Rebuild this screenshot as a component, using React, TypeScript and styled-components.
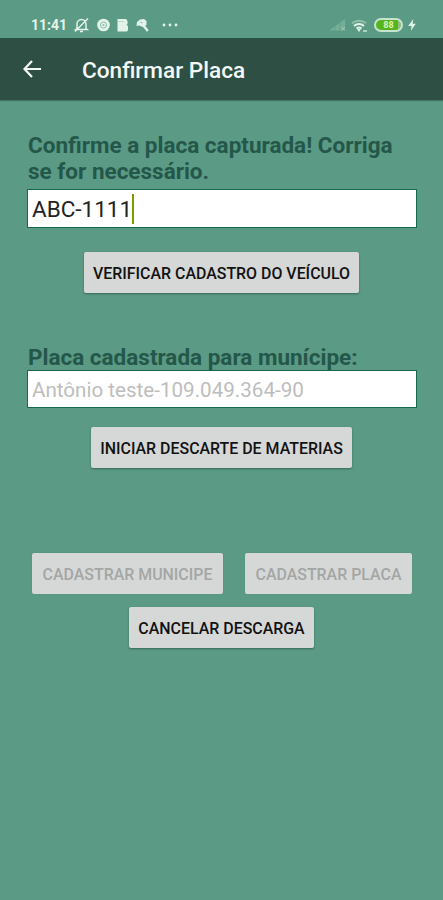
import React from 'react';
import styled, { createGlobalStyle } from 'styled-components';

const GlobalStyle = createGlobalStyle`
  * { box-sizing: border-box; }
  body { margin: 0; background: #5b9a84; font-family: Roboto, sans-serif; }
`;

const Screen = styled.div`
  width: 443px;
  height: 900px;
  overflow: hidden;
  background: #5b9a84;
`;

const StatusBar = styled.header`
  height: 38px;
  padding: 12px 27px 0 31px;
  display: flex;
  justify-content: space-between;
  color: #e4f3ea;
`;

const StatusGroup = styled.div<{ $gap: number }>`
  height: 26px;
  display: flex;
  align-items: center;
  gap: ${(p) => p.$gap}px;
`;

const Clock = styled.span`
  width: 35px;
  font-size: 14px;
  font-weight: 700;
  white-space: nowrap;
`;

const StatusIcons = styled.div`
  margin-right: 5px;
  display: flex;
  align-items: center;
  gap: 7.5px;
`;

const Battery = styled.span`
  width: 29px;
  height: 14px;
  margin-left: 1px;
  border: 2px solid #c5e3cf;
  border-radius: 7px;
  background: linear-gradient(90deg, #55b51c 88%, #91bd83 88%);
  color: #d9f3b8;
  font-size: 9px;
  font-weight: 700;
  line-height: 10px;
  text-align: center;
`;

const AppBar = styled.nav`
  height: 62px;
  padding-left: 21px;
  display: flex;
  align-items: center;
  background: #2d4f44;
  color: #f4f8f6;
  box-shadow: 0 1px 1px rgba(35, 75, 62, 0.45);
`;

const Title = styled.h1`
  margin: 4px 0 0 39px;
  font-size: 22.6px;
  font-weight: 500;
  line-height: 28px;
  white-space: nowrap;
`;

const Form = styled.main`
  padding: 32px 26px 0 27px;
  display: flex;
  flex-direction: column;
`;

const Label = styled.label<{ $top?: number }>`
  margin-top: ${(p) => p.$top ?? 0}px;
  padding-left: 1px;
  color: #24574a;
  font-size: 22.5px;
  font-weight: 700;
  line-height: 26px;
  white-space: nowrap;
`;

const Field = styled.div<{ $height: number; $top: number; $muted?: boolean }>`
  height: ${(p) => p.$height}px;
  margin-top: ${(p) => p.$top}px;
  padding: 1px 0 0 4px;
  display: flex;
  align-items: center;
  border: 1px solid #17694e;
  background: #fff;
  color: ${(p) => (p.$muted ? '#bdbdbd' : '#222')};
  font-size: ${(p) => (p.$muted ? 20.6 : 22.5)}px;
  line-height: 26px;
  white-space: nowrap;
`;

const Caret = styled.span`
  width: 2px;
  height: 30px;
  background: #7a9e00;
`;

const ButtonRow = styled.div<{ $top: number; $shift?: number }>`
  margin-top: ${(p) => p.$top}px;
  padding-right: ${(p) => p.$shift ?? 0}px;
  display: flex;
  justify-content: center;
  gap: 22px;
`;

const Button = styled.button<{ $width: number }>`
  width: ${(p) => p.$width}px;
  height: 41px;
  padding: 2px 0 0;
  border: 0;
  border-radius: 2px;
  background: #d6d8d7;
  color: #121212;
  font: 500 15.93px/20px Roboto, sans-serif;
  white-space: nowrap;
  box-shadow: 0 1px 2px rgba(20, 60, 45, 0.5);
  &:disabled {
    color: #a3a6a5;
    box-shadow: 0 0 1px rgba(20, 60, 45, 0.25);
  }
`;

const MutedBell = () => (
  <svg width="15" height="16" viewBox="0 0 15 16" fill="none" stroke="currentColor" strokeWidth="1.5">
    <path d="M3 11.5V7a4.5 4.5 0 0 1 9 0v4.5l1.2 1H1.8z M6 14.5h3 M1 14.5 14 1.5" />
  </svg>
);
const TargetIcon = () => (
  <svg width="13" height="14" viewBox="0 0 13 14">
    <circle cx="6.5" cy="7" r="6.3" fill="currentColor" />
    <circle cx="6.5" cy="7" r="3" fill="none" stroke="#8dbda9" />
    <circle cx="6.5" cy="7" r="1" fill="#8dbda9" />
  </svg>
);
const CardIcon = () => (
  <svg width="11" height="14" viewBox="0 0 11 14" fill="currentColor">
    <path d="M.5 1h8.5l1.5 2v3l-1 1 1.5 1v4l-1 1.5H.5z" />
    <path d="M1 3.5h6" stroke="#b2d4c4" strokeWidth=".8" />
  </svg>
);
const KeyIcon = () => (
  <svg width="13" height="15" viewBox="0 0 13 15">
    <path d="M1 4 4 1.5 8 1l2.5 2v4L7 9 3 7.5.5 8z" fill="currentColor" />
    <path d="m7 7 4.8 6" stroke="currentColor" strokeWidth="2.4" />
    <path d="m4 4 2.5 1" stroke="#8dbda9" strokeWidth="1" />
  </svg>
);
const MoreIcon = () => (
  <svg width="16" height="4" viewBox="0 0 16 4" fill="currentColor">
    <circle cx="2" cy="2" r="1.4" /><circle cx="8" cy="2" r="1.4" /><circle cx="14" cy="2" r="1.4" />
  </svg>
);
const SignalIcon = () => (
  <svg width="18" height="14" viewBox="0 0 18 14" fill="#7fb69d">
    <path d="M1 12.5 17 1v11.5z" opacity=".75" />
    <path d="M12 4v8 M7 8v4" stroke="#65a18b" />
    <path d="m13.5 9 3.5 3.5m0-3.5-3.5 3.5" stroke="#9ac9b4" />
  </svg>
);
const WifiIcon = () => (
  <svg width="17" height="15" viewBox="0 0 17 15" fill="none">
    <path d="M1 5.2a11 11 0 0 1 14 0" stroke="#91c2ac" strokeWidth="2" />
    <path d="M3 8a7.5 7.5 0 0 1 10 0M5.5 10.5a4 4 0 0 1 5 0" stroke="currentColor" strokeWidth="2" />
    <path d="M6 11h4l-2 3z" fill="currentColor" />
    <path d="M12 13h4" stroke="#a9d2bf" strokeWidth="2" />
  </svg>
);
const BoltIcon = () => (
  <svg width="8" height="12" viewBox="0 0 8 12" fill="currentColor">
    <path d="M5.3 0 .2 7H3.6l-.8 5L7.8 4.7H4.6z" />
  </svg>
);
const BackIcon = () => (
  <svg width="22" height="20" viewBox="0 0 22 20" fill="none" stroke="currentColor" strokeWidth="2.2">
    <path d="M20 10H3.5M11 2 3.5 10l7.5 8" />
  </svg>
);

export default function App() {
  return (
    <Screen>
      <GlobalStyle />
      <StatusBar>
        <StatusGroup $gap={8}>
          <Clock>11:41</Clock>
          <StatusIcons>
            <MutedBell />
            <TargetIcon />
            <CardIcon />
            <KeyIcon />
          </StatusIcons>
          <MoreIcon />
        </StatusGroup>
        <StatusGroup $gap={5}>
          <SignalIcon />
          <WifiIcon />
          <Battery>88</Battery>
          <BoltIcon />
        </StatusGroup>
      </StatusBar>
      <AppBar>
        <BackIcon />
        <Title>Confirmar Placa</Title>
      </AppBar>
      <Form>
        <Label>Confirme a placa capturada! Corriga<br />se for necessário.</Label>
        <Field $height={39} $top={5}>ABC-1111<Caret /></Field>
        <ButtonRow $top={24} $shift={1}>
          <Button $width={275}>VERIFICAR CADASTRO DO VEÍCULO</Button>
        </ButtonRow>
        <Label $top={51}>Placa cadastrada para munícipe:</Label>
        <Field $height={38} $top={0} $muted>Antônio teste-109.049.364-90</Field>
        <ButtonRow $top={19} $shift={1}>
          <Button $width={261}>INICIAR DESCARTE DE MATERIAS</Button>
        </ButtonRow>
        <ButtonRow $top={85}>
          <Button $width={191} disabled>CADASTRAR MUNICIPE</Button>
          <Button $width={167} disabled>CADASTRAR PLACA</Button>
        </ButtonRow>
        <ButtonRow $top={13} $shift={1}>
          <Button $width={185}>CANCELAR DESCARGA</Button>
        </ButtonRow>
      </Form>
    </Screen>
  );
}
